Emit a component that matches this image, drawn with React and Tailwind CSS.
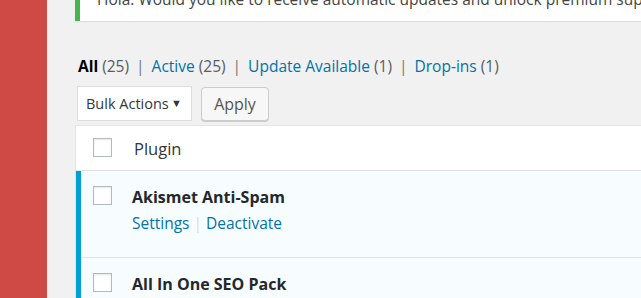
import React from "react";

function Box() {
  return (
    <div className="h-[19px] w-[19px] shrink-0 border border-[#b4b9be] bg-white shadow-[inset_0_1px_2px_rgba(0,0,0,0.1)]" />
  );
}

function Row({ title, actions, last }) {
  return (
    <div className="flex bg-[#f7fcfe]">
      <div className="w-[5px] shrink-0 bg-[#00a0d2]" />
      <div className={"flex flex-1 " + (last ? "h-[60px]" : "h-[87px] border-b border-[#e1e1e1]")}>
        <div className="pl-[12px] pt-[15px]">
          <Box />
        </div>
        <div className="pl-[20px] pt-[14px]">
          <div className="whitespace-nowrap text-[16px] font-bold leading-[24px] text-[#23282d]">{title}</div>
          {actions && (
            <div className="mt-[2px] flex whitespace-nowrap text-[15.5px] leading-[24px] text-[#0073aa]">
              <span>Settings</span>
              <span className="px-[4px] text-[#dddddd]">|</span>
              <span>Deactivate</span>
            </div>
          )}
        </div>
      </div>
    </div>
  );
}

export default function App() {
  return (
    <div className="flex h-[298px] w-[641px] overflow-hidden bg-[#f1f1f1] font-['Open_Sans','Noto_Sans',sans-serif]">
      <div className="w-[47px] shrink-0 bg-[#d04a45]" />
      <div className="min-w-0 flex-1 overflow-hidden pl-[28px]">
        <div className="h-[21px] w-[700px] overflow-hidden whitespace-nowrap border-l-[5px] border-[#46b450] bg-white pl-[17px] shadow-[0_1px_1px_rgba(0,0,0,0.08)]">
          <p className="-mt-[13px] text-[15.5px] leading-[24px] text-[#444444]">
            Hola: Would you like to receive automatic updates and unlock premium support?
          </p>
        </div>

        <ul className="mt-[33px] flex whitespace-nowrap pl-[3px] text-[15.5px] leading-[24px] text-[#555d66]">
          <li>
            <span className="font-bold text-black">All</span> <span>(25)</span>
            <span className="px-[7px] text-[#72777c]">|</span>
          </li>
          <li>
            <span className="text-[#0073aa]">Active</span> <span>(25)</span>
            <span className="px-[7px] text-[#72777c]">|</span>
          </li>
          <li>
            <span className="text-[#0073aa]">Update Available</span> <span>(1)</span>
            <span className="px-[7px] text-[#72777c]">|</span>
          </li>
          <li>
            <span className="text-[#0073aa]">Drop-ins</span> <span>(1)</span>
          </li>
        </ul>

        <div className="mt-[8px] flex h-[35px] items-start gap-[9px] pl-[2px]">
          <div className="flex h-[35px] w-[115px] items-center justify-between whitespace-nowrap border border-[#dddddd] bg-white pl-[8px] pr-[9px] text-[14.5px] text-[#32373c]">
            <span>Bulk Actions</span>
            <span className="text-[11px] text-[#32373c]">▼</span>
          </div>
          <div className="mt-[1px] flex h-[34px] w-[68px] items-center justify-center rounded-[4px] border border-[#cccccc] bg-[#f7f7f7] text-[16px] text-[#555555] shadow-[0_1px_0_#cccccc]">
            Apply
          </div>
        </div>

        <div className="mt-[4px] w-[640px] border-l border-t border-[#e5e5e5] shadow-[0_1px_1px_rgba(0,0,0,0.04)]">
          <div className="flex h-[45px] border-b border-[#e1e1e1] bg-white">
            <div className="pl-[17px] pt-[12px]">
              <Box />
            </div>
            <div className="pl-[22px] pt-[11px] text-[16.5px] leading-[24px] text-[#32373c]">Plugin</div>
          </div>
          <Row title="Akismet Anti-Spam" actions />
          <Row title="All In One SEO Pack" last />
        </div>
      </div>
    </div>
  );
}
